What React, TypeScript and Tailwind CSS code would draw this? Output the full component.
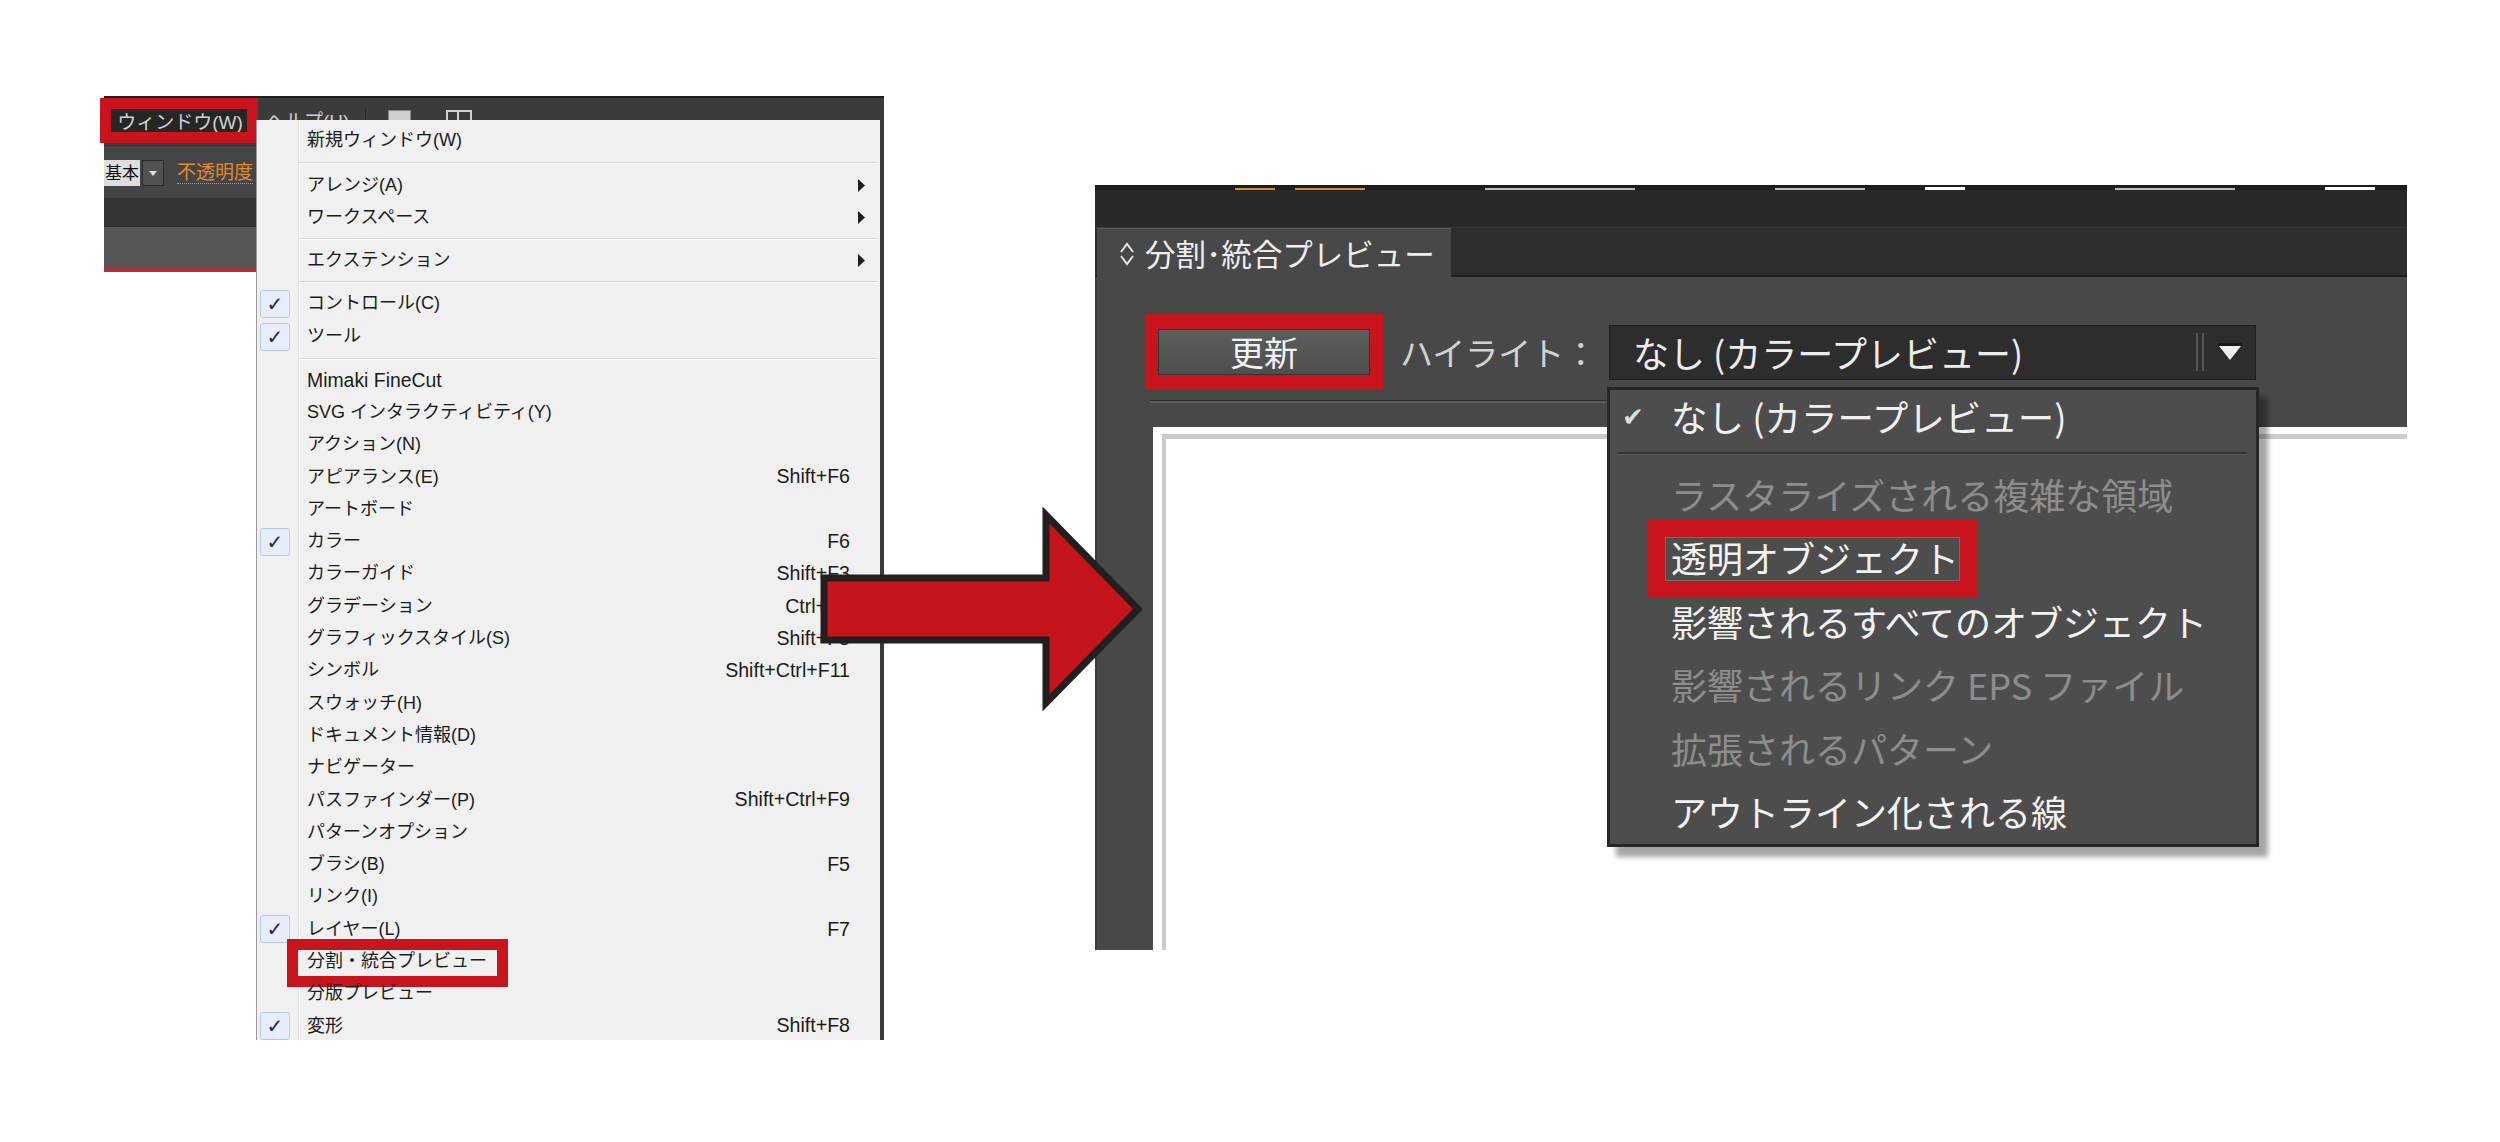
import React from 'react';

const jp = "font-['Liberation_Sans','Noto_Sans_CJK_JP',sans-serif]";
const cjk = "font-['Noto_Sans_CJK_JP','Noto_Sans_CJK_SC',sans-serif]";

type MenuRow = {
  label: string;
  shortcut?: string;
  checked?: boolean;
  submenu?: boolean;
  marked?: boolean;
  latin?: boolean;
};

const topRows: (MenuRow | 'sep')[] = [
  { label: '新規ウィンドウ(W)' },
  'sep',
  { label: 'アレンジ(A)', submenu: true },
  { label: 'ワークスペース', submenu: true },
  'sep',
  { label: 'エクステンション', submenu: true },
  'sep',
  { label: 'コントロール(C)', checked: true },
  { label: 'ツール', checked: true },
  'sep',
];

const panelRows: MenuRow[] = [
  { label: 'Mimaki FineCut', latin: true },
  { label: 'SVG インタラクティビティ(Y)' },
  { label: 'アクション(N)' },
  { label: 'アピアランス(E)', shortcut: 'Shift+F6' },
  { label: 'アートボード' },
  { label: 'カラー', shortcut: 'F6', checked: true },
  { label: 'カラーガイド', shortcut: 'Shift+F3' },
  { label: 'グラデーション', shortcut: 'Ctrl+F9' },
  { label: 'グラフィックスタイル(S)', shortcut: 'Shift+F5' },
  { label: 'シンボル', shortcut: 'Shift+Ctrl+F11' },
  { label: 'スウォッチ(H)' },
  { label: 'ドキュメント情報(D)' },
  { label: 'ナビゲーター' },
  { label: 'パスファインダー(P)', shortcut: 'Shift+Ctrl+F9' },
  { label: 'パターンオプション' },
  { label: 'ブラシ(B)', shortcut: 'F5' },
  { label: 'リンク(I)' },
  { label: 'レイヤー(L)', shortcut: 'F7', checked: true },
  { label: '分割・統合プレビュー', marked: true },
  { label: '分版プレビュー' },
  { label: '変形', shortcut: 'Shift+F8', checked: true },
];

const Check = () => (
  <div className="ml-[3px] w-[30px] h-[28px] rounded-[3px] border border-[#b9c9e2] bg-[#e7eef9] flex items-center justify-center">
    <span className="font-['DejaVu_Sans',sans-serif] text-[20px] leading-none text-[#1d2672]">✓</span>
  </div>
);

const Row = ({ row, h }: { row: MenuRow; h: string }) => (
  <div className={`relative flex items-center ${h}`}>
    {row.marked && (
      <div className="absolute left-[30px] top-[-6px] w-[221px] h-[48px] border-[11px] border-[#c8141c]" />
    )}
    <div className="w-[50px] shrink-0 flex items-center">{row.checked && <Check />}</div>
    <span className={`relative flex-1 ${row.latin ? 'text-[19.4px]' : 'text-[18px]'} text-[#1b1b1b] whitespace-nowrap`}>
      {row.label}
    </span>
    {row.shortcut && <span className="text-[19.6px] text-[#1b1b1b] whitespace-nowrap">{row.shortcut}</span>}
    <div className="w-[30px] shrink-0 flex items-center">
      {row.submenu && (
        <svg width="8" height="13" viewBox="0 0 8 13" className="ml-[8px]">
          <polygon points="0,0 7,6.5 0,13" fill="#1e1e1e" />
        </svg>
      )}
    </div>
  </div>
);

const Sep = ({ h, pt }: { h: string; pt: string }) => (
  <div className={`${h} ${pt}`}>
    <div className="ml-[42px] mr-[2px] h-[1px] bg-[#d6d6d6]" />
    <div className="ml-[42px] mr-[2px] h-[1px] bg-white" />
  </div>
);

function WindowMenu() {
  return (
    <div className={`absolute left-[152px] top-[24px] w-[628px] h-[920px] overflow-hidden bg-[#f0f0f0] border-l border-l-[#9c9c9c] border-r-[4px] border-r-[#3a3a3a] pt-[4px] ${jp}`}>
      <div className="absolute left-[41px] top-0 bottom-0 w-[1px] bg-[#e3e3e3]" />
      <div className="absolute left-[42px] top-0 bottom-0 w-[1px] bg-white" />
      <div className="relative">
        {topRows.map((r, i) => {
          if (r === 'sep') {
            return i === 1 ? <Sep key={i} h="h-[13px]" pt="pt-[6px]" /> : <Sep key={i} h="h-[11px]" pt="pt-[5px]" />;
          }
          return <Row key={i} row={r} h={r.checked ? 'h-[33px]' : 'h-[32px]'} />;
        })}
        {panelRows.map((r, i) => (
          <Row key={'p' + i} row={r} h="h-[32.3px]" />
        ))}
      </div>
    </div>
  );
}

function LeftShot() {
  return (
    <div className="relative ml-[104px] mt-[96px] w-[780px] h-[944px] shrink-0">
      <div className={`flex flex-col ${jp}`}>
        <div className="h-[51px] bg-[#3b3b3b] border-t-[2px] border-t-[#1f1f1f] flex items-center">
          <div className="ml-[7px] w-[138px] h-[28px] bg-[#262626] flex items-center justify-center text-[19px] text-[#d2d2d2] leading-none">
            ウィンドウ(W)
          </div>
          <span className="ml-[17px] text-[19px] text-[#cfcfcf]">ヘルプ(H)</span>
          <div className="ml-[16px] w-[1px] h-[30px] bg-[#262626]" />
          <div className="ml-[22px] w-[23px] h-[26px] bg-[#cfcfcf] border border-[#8a8a8a]" />
          <div className="ml-[35px] flex items-end gap-[3px]">
            <div className="w-[26px] h-[26px] border-[2px] border-[#d0d0d0] flex">
              <div className="w-1/2 border-r-[2px] border-[#d0d0d0]" />
            </div>
            <div className="w-0 h-0 border-l-[5px] border-r-[5px] border-t-[5px] border-l-transparent border-r-transparent border-t-[#d0d0d0] mb-[4px]" />
          </div>
        </div>
        <div className="h-[51px] bg-[#454545] border-t border-t-[#505050] flex items-center">
          <div className="w-[36px] h-[26px] bg-[#dedede] flex items-center justify-center">
            <span className="text-[17px] text-[#111] whitespace-nowrap leading-none">基本</span>
          </div>
          <div className="ml-[2px] w-[22px] h-[26px] bg-[#525252] border border-[#2b2b2b] flex items-center justify-center">
            <div className="w-0 h-0 border-l-[4px] border-r-[4px] border-t-[5px] border-l-transparent border-r-transparent border-t-[#e0e0e0]" />
          </div>
          <span className="ml-[13px] text-[19px] text-[#e28a2c] leading-none border-b border-dotted border-[#e28a2c] pb-[1px]">不透明度</span>
        </div>
        <div className="h-[29px] bg-[#323232]" />
        <div className="h-[41px] bg-[#565656]" />
        <div className="h-[4px] bg-[#b0303c]" />
      </div>
      <div className="absolute left-[-4px] top-[2px] w-[158px] h-[45px] border-[11px] border-[#c8141c]" />
      <WindowMenu />
    </div>
  );
}

type PopItem = { label: string; disabled?: boolean; marked?: boolean };

const popItems: PopItem[] = [
  { label: 'ラスタライズされる複雑な領域', disabled: true },
  { label: '透明オブジェクト', marked: true },
  { label: '影響されるすべてのオブジェクト' },
  { label: '影響されるリンク EPS ファイル', disabled: true },
  { label: '拡張されるパターン', disabled: true },
  { label: 'アウトライン化される線' },
];

function HighlightPopup() {
  return (
    <div className={`absolute left-[512px] top-[202px] w-[652px] h-[460px] bg-[#4d4d4d] border-[3px] border-[#262626] shadow-[9px_10px_5px_rgba(0,0,0,0.35)] ${cjk}`}>
      <div className="h-[54px] flex items-center">
        <span className="w-[61px] pl-[12px] font-['DejaVu_Sans',sans-serif] text-[26px] text-[#dcdcdc] leading-none">✔</span>
        <span className="text-[36.5px] text-[#f0f0f0] leading-none whitespace-nowrap">なし (カラープレビュー)</span>
      </div>
      <div className="h-[18px] pt-[8px] pl-[8px] pr-[9px]">
        <div className="h-[2px] bg-[#363636]" />
        <div className="h-[1px] bg-[#5c5c5c]" />
      </div>
      {popItems.map((it, i) => (
        <div key={i} className="relative h-[63.5px] flex items-center pl-[61px]">
          {it.marked && (
            <div className="absolute left-[38px] top-[-6px] w-[329px] h-[78px] border-[17px] border-[#c8141c]">
              <div className="w-full h-full border border-[#6e6e6e]" />
            </div>
          )}
          <span className={`relative text-[36px] leading-none whitespace-nowrap ${it.disabled ? 'text-[#8d8d8d]' : 'text-[#f2f2f2]'}`}>
            {it.label}
          </span>
        </div>
      ))}
    </div>
  );
}

function RightShot() {
  return (
    <div className={`relative ml-[211px] mt-[185px] w-[1312px] h-[765px] shrink-0 flex flex-col ${cjk}`}>
      <div className="h-[5px] bg-[#1d1d1d] flex items-end">
        <div className="ml-[140px] w-[40px] h-[2px] bg-[#d88a3a]" />
        <div className="ml-[20px] w-[70px] h-[2px] bg-[#d88a3a]" />
        <div className="ml-[120px] w-[150px] h-[2px] bg-[#bdbdbd]" />
        <div className="ml-[140px] w-[90px] h-[2px] bg-[#bdbdbd]" />
        <div className="ml-[60px] w-[40px] h-[3px] bg-white" />
        <div className="ml-[150px] w-[120px] h-[2px] bg-[#bdbdbd]" />
        <div className="ml-[90px] w-[50px] h-[3px] bg-white" />
      </div>
      <div className="h-[38px] bg-[#292929] border-b border-b-[#3a3a3a]" />
      <div className="h-[49px] bg-[#2d2d2d] flex border-b-[2px] border-b-[#1e1e1e]">
        <div className="ml-[2px] w-[354px] h-[50px] bg-[#484848] border-t border-t-[#5a5a5a] flex items-center pl-[21px]">
          <svg width="18" height="26" viewBox="0 0 18 26" className="mr-[9px]">
            <polyline points="3,11 9,3 15,11" fill="none" stroke="#e6e6e6" strokeWidth="2" />
            <polyline points="3,15 9,23 15,15" fill="none" stroke="#e6e6e6" strokeWidth="2" />
          </svg>
          <span className="text-[30.5px] text-[#eeeeee] leading-none whitespace-nowrap">分割･統合プレビュー</span>
        </div>
      </div>
      <div className="flex-1 bg-[#484848] border-l-[2px] border-l-[#3c3c3c] flex flex-col">
        <div className="mt-[37px] flex items-center pl-[48px]">
          <div className="bg-[#c8141c] px-[13px] py-[15px]">
            <div className="w-[212px] h-[46px] bg-gradient-to-b from-[#5e5e5e] to-[#4e4e4e] border border-[#333] flex items-center justify-center">
              <span className="text-[34px] text-[#f2f2f2] leading-none">更新</span>
            </div>
          </div>
          <span className="ml-[17px] w-[209px] text-[33px] text-[#d2d2d2] leading-none whitespace-nowrap">ハイライト：</span>
          <div className="w-[647px] h-[55px] bg-[#2d2d2d] border border-[#1e1e1e] flex items-center">
            <span className="flex-1 pl-[23px] text-[36px] text-[#ececec] leading-none whitespace-nowrap">なし (カラープレビュー)</span>
            <div className="w-[8px] h-[38px] border-l-[2px] border-r-[2px] border-[#555555]" />
            <div className="w-[51px] flex items-center justify-center">
              <svg width="24" height="18" viewBox="0 0 24 18">
                <rect x="0" y="0" width="24" height="3" fill="#1a1a1a" />
                <polygon points="1,3 23,3 12,17" fill="#f0f0f0" />
              </svg>
            </div>
          </div>
        </div>
        <div className="mt-[10px] ml-[53px] mr-[150px] h-[1px] bg-[#2e2e2e]" />
        <div className="ml-[53px] mr-[150px] h-[2px] bg-[#5c5c5c]" />
        <div className="mt-[24px] ml-[56px] flex-1 bg-white pt-[7px] pl-[9px]">
          <div className="h-full border-t-[5px] border-l-[4px] border-[#cbcbcb] bg-white" />
        </div>
      </div>
      <HighlightPopup />
    </div>
  );
}

export default function App() {
  return (
    <div className="relative w-[2500px] h-[1142px] bg-white overflow-hidden flex items-start">
      <LeftShot />
      <RightShot />
      <svg className="absolute left-[815px] top-[500px]" width="335" height="220" viewBox="0 0 335 220">
        <polygon
          points="9,78 231,78 231,15 323,109 231,203 231,140 9,140"
          fill="#c4151c"
          stroke="#231f20"
          strokeWidth="7"
          strokeLinejoin="miter"
        />
      </svg>
    </div>
  );
}
